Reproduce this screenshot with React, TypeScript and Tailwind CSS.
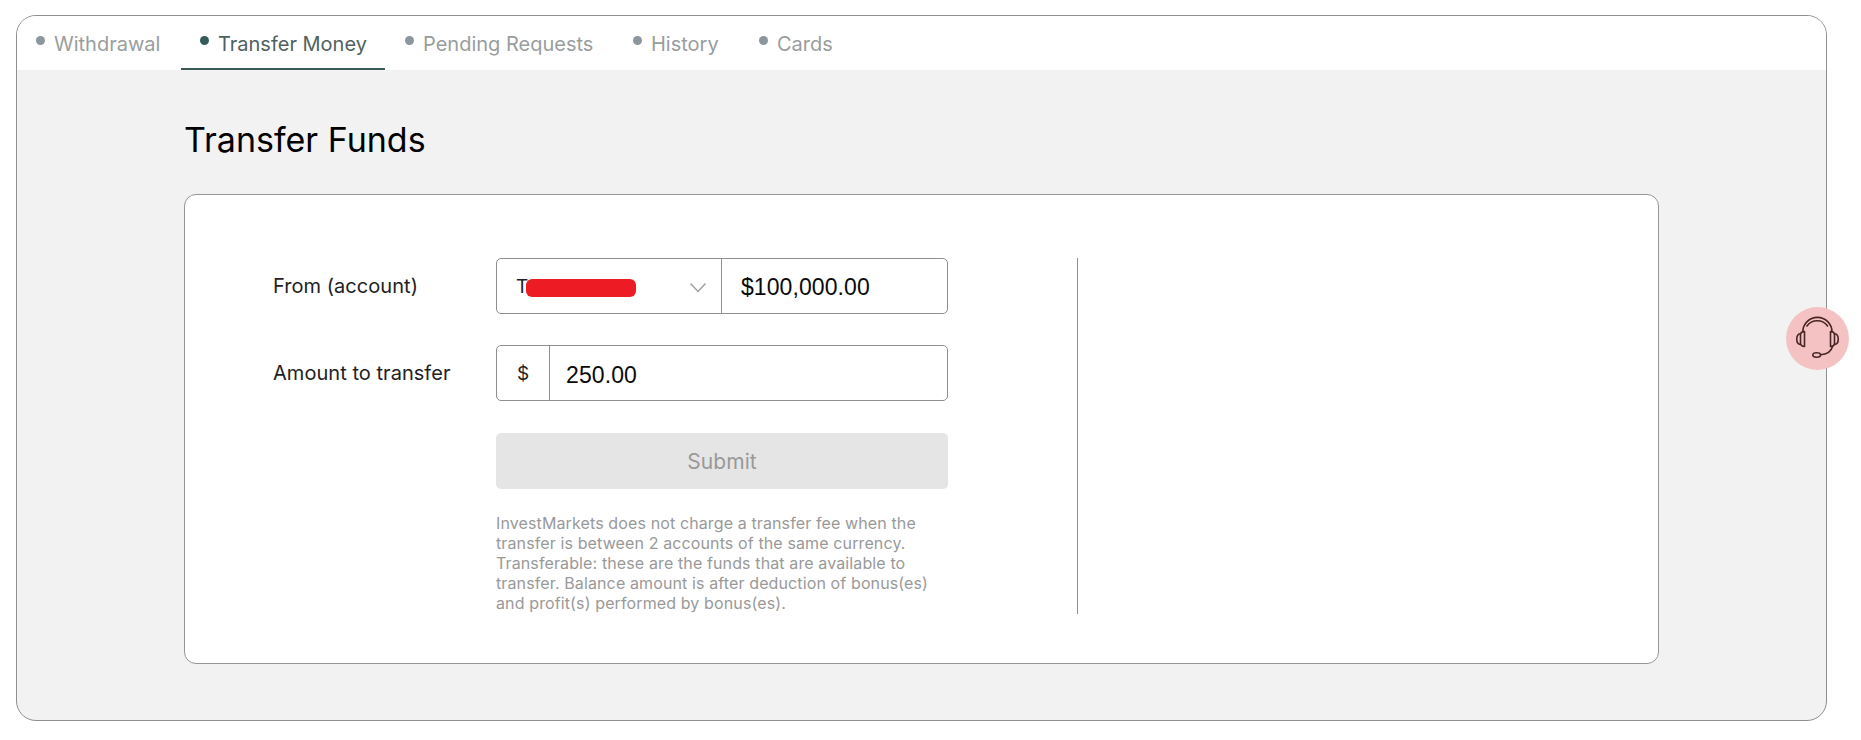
import { useState } from "react";

const tabs = [
  { label: "Withdrawal", width: "w-[164px]" },
  { label: "Transfer Money", width: "w-[204px] mr-px" },
  { label: "Pending Requests", width: "w-[228px]" },
  { label: "History", width: "w-[126px]" },
  { label: "Cards", width: "w-[112px]" },
];

function HeadsetIcon(): JSX.Element {
  return (
    <svg
      viewBox="0 0 63 63"
      className="h-[63px] w-[63px]"
      fill="none"
      stroke="#4a2526"
      strokeWidth={1.6}
      strokeLinecap="round"
      strokeLinejoin="round"
    >
      <path d="M16.800 25 A14.600 14.600 0 0 1 46 25" />
      <path d="M21 19 C25.500 12 37 12 41.500 19" />
      <path d="M18.500 24.500 V39.500 C15.800 39.500 14.500 38 14.500 36 V28 C14.500 26 15.800 24.500 18.500 24.500 Z" />
      <path d="M44.500 24.500 V39.500 C47.200 39.500 48.500 38 48.500 36 V28 C48.500 26 47.200 24.500 44.500 24.500 Z" />
      <path d="M14.500 26.500 C9.500 27.500 9.500 37 14.500 37.500" />
      <path d="M48.500 26.500 C53.500 27.500 53.500 37 48.500 37.500" />
      <path d="M46.500 39.500 C45 45 40 47.500 34.500 47.800" />
      <ellipse cx="30.700" cy="48" rx="3.900" ry="2.200" />
    </svg>
  );
}

export default function App(): JSX.Element {
  const [active, setActive] = useState("Transfer Money");
  const [amount, setAmount] = useState("250.00");

  return (
    <div className="relative h-[740px] w-[1861px] overflow-hidden bg-white pl-4 pt-[15px] font-['Inter',sans-serif]">
      <main className="h-[706px] w-[1811px] overflow-hidden rounded-[20px] border border-[#8f8f8f] bg-[#f2f2f2]">
        <nav className="flex h-[54px] bg-white">
          {tabs.map((tab) => (
            <button
              key={tab.label}
              type="button"
              onClick={() => setActive(tab.label)}
              className={`flex h-full shrink-0 items-start border-b-2 pt-[14px] pl-[19px] text-left text-[20px] leading-7 whitespace-nowrap ${tab.width} ${
                active === tab.label
                  ? "border-[#3c5a58] text-[#50615f]"
                  : "border-transparent text-[#999d9e]"
              }`}
            >
              <span
                className={`mt-[6px] mr-[9px] h-[9px] w-[9px] shrink-0 rounded-full ${
                  active === tab.label ? "bg-[#355c5a]" : "bg-[#8b979c]"
                }`}
              />
              {tab.label}
            </button>
          ))}
        </nav>

        <div className="pl-[167px]">
          <h1 className="mt-[47px] text-[34px] leading-[46px] text-black">Transfer Funds</h1>

          <section className="mt-[31px] flex h-[470px] w-[1475px] rounded-xl border border-[#969696] bg-white pt-[63px] pl-[88px]">
            <form onSubmit={(e) => e.preventDefault()} className="w-[804px] text-[#1e2222]">
              <div className="flex h-14 items-center">
                <label className="w-[223px] text-[20px] tracking-[0.04px]">From (account)</label>
                <div className="flex h-14 w-[452px] rounded-[5px] border border-[#8f8f8f]">
                  <div className="flex w-[225px] items-center border-r border-[#8f8f8f] pr-[14px] pl-[19px]">
                    <span className="mt-[3px] text-[19px]">T</span>
                    <span className="mt-[3px] -ml-[2px] h-[18px] w-[110px] rounded-[6px] bg-[#ed1c24]" />
                    <svg viewBox="0 0 18 12" className="mt-[4px] ml-auto h-3 w-[18px]" fill="none" stroke="#a0a0a0" strokeWidth={1.5}>
                      <path d="M1.500 1.500 L9 9.500 L16.500 1.500" />
                    </svg>
                  </div>
                  <span className="flex items-center pt-[2px] pl-[19px] font-['Liberation_Sans',Arial,sans-serif] text-[23px] tracking-[0.08px] text-[#0a0a0a]">
                    $100,000.00
                  </span>
                </div>
              </div>

              <div className="mt-[31px] flex h-14 items-center">
                <label className="w-[223px] text-[20px] tracking-[0.04px]">Amount to transfer</label>
                <div className="flex h-14 w-[452px] rounded-[5px] border border-[#8f8f8f]">
                  <span className="flex w-[53px] items-center justify-center border-r border-[#8f8f8f] pt-[3px] text-[19px]">
                    $
                  </span>
                  <input
                    value={amount}
                    onChange={(e) => setAmount(e.target.value)}
                    className="min-w-0 flex-1 pt-[4px] pl-4 font-['Liberation_Sans',Arial,sans-serif] text-[23px] tracking-[0.1px] text-[#0a0a0a] outline-none"
                  />
                </div>
              </div>

              <div className="mt-[32px] ml-[223px] w-[452px]">
                <button type="submit" className="h-14 w-full rounded-[5px] bg-[#e5e5e5] pt-[2px] text-[21px] tracking-[0.1px] text-[#999]">
                  Submit
                </button>
                <p className="mt-6 text-[16px] leading-5 tracking-[0.12px] whitespace-nowrap text-[#999]">
                  InvestMarkets does not charge a transfer fee when the
                  <br />
                  transfer is between 2 accounts of the same currency.
                  <br />
                  Transferable: these are the funds that are available to
                  <br />
                  transfer. Balance amount is after deduction of bonus(es)
                  <br />
                  and profit(s) performed by bonus(es).
                </p>
              </div>
            </form>
            <div className="h-[356px] w-px bg-[#8f8f8f]" />
          </section>
        </div>
      </main>

      <button
        type="button"
        aria-label="Support"
        className="absolute top-[307px] left-[1786px] h-[63px] w-[63px] rounded-full bg-[#f4c2c2]"
      >
        <HeadsetIcon />
      </button>
    </div>
  );
}
